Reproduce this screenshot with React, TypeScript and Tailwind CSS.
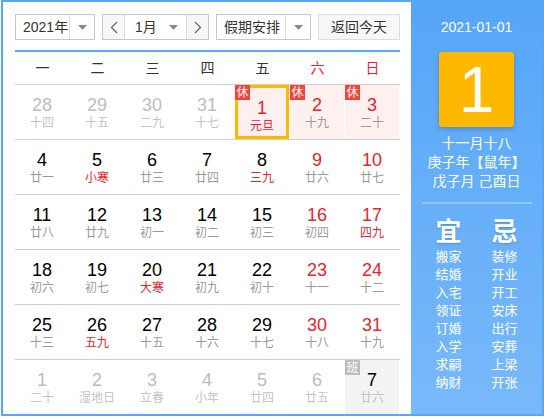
import React from "react";

type Day = {
  n: number;
  lunar: string;
  other?: boolean;
  red?: boolean;
  fest?: boolean;
  badge?: "休" | "班";
  selected?: boolean;
};

const weeks: Day[][] = [
  [
    { n: 28, lunar: "十四", other: true },
    { n: 29, lunar: "十五", other: true },
    { n: 30, lunar: "二九", other: true },
    { n: 31, lunar: "十七", other: true },
    { n: 1, lunar: "元旦", red: true, fest: true, badge: "休", selected: true },
    { n: 2, lunar: "十九", red: true, badge: "休" },
    { n: 3, lunar: "二十", red: true, badge: "休" },
  ],
  [
    { n: 4, lunar: "廿一" },
    { n: 5, lunar: "小寒", fest: true },
    { n: 6, lunar: "廿三" },
    { n: 7, lunar: "廿四" },
    { n: 8, lunar: "三九", fest: true },
    { n: 9, lunar: "廿六", red: true },
    { n: 10, lunar: "廿七", red: true },
  ],
  [
    { n: 11, lunar: "廿八" },
    { n: 12, lunar: "廿九" },
    { n: 13, lunar: "初一" },
    { n: 14, lunar: "初二" },
    { n: 15, lunar: "初三" },
    { n: 16, lunar: "初四", red: true },
    { n: 17, lunar: "四九", red: true, fest: true },
  ],
  [
    { n: 18, lunar: "初六" },
    { n: 19, lunar: "初七" },
    { n: 20, lunar: "大寒", fest: true },
    { n: 21, lunar: "初九" },
    { n: 22, lunar: "初十" },
    { n: 23, lunar: "十一", red: true },
    { n: 24, lunar: "十二", red: true },
  ],
  [
    { n: 25, lunar: "十三" },
    { n: 26, lunar: "五九", fest: true },
    { n: 27, lunar: "十五" },
    { n: 28, lunar: "十六" },
    { n: 29, lunar: "十七" },
    { n: 30, lunar: "十八", red: true },
    { n: 31, lunar: "十九", red: true },
  ],
  [
    { n: 1, lunar: "二十", other: true },
    { n: 2, lunar: "湿地日", other: true },
    { n: 3, lunar: "立春", other: true },
    { n: 4, lunar: "小年", other: true },
    { n: 5, lunar: "廿四", other: true },
    { n: 6, lunar: "廿五", other: true },
    { n: 7, lunar: "廿六", badge: "班" },
  ],
];

const weekNames = ["一", "二", "三", "四", "五", "六", "日"];
const yi = ["搬家", "结婚", "入宅", "领证", "订婚", "入学", "求嗣", "纳财"];
const ji = ["装修", "开业", "开工", "安床", "出行", "安葬", "上梁", "开张"];

const Caret = () => (
  <svg width="9" height="5" viewBox="0 0 9 5">
    <path d="M0 0 L9 0 L4.5 5 Z" fill="#8a8a8a" />
  </svg>
);

const Chevron = ({ dir }: { dir: "l" | "r" }) => (
  <svg width="8" height="13" viewBox="0 0 8 13">
    <polyline
      points={dir === "l" ? "7,1 1.5,6.5 7,12" : "1,1 6.5,6.5 1,12"}
      fill="none"
      stroke="#666"
      strokeWidth="1.2"
    />
  </svg>
);

function Cell({ d }: { d: Day }) {
  let bg = "";
  if (d.badge === "休") bg = "bg-[#fff0f0]";
  if (d.badge === "班") bg = "bg-[#f3f3f3]";
  const numColor = d.other
    ? "text-[#bdbdbd]"
    : d.red
    ? "text-[#e5252b]"
    : "text-black";
  const lunarColor = d.other
    ? "text-[#c4c4c4]"
    : d.fest
    ? "text-[#e5252b]"
    : d.badge === "班"
    ? "text-[#c4c4c4]"
    : "text-[#9a9a9a]";
  return (
    <div className="relative h-[54px] w-[55px] pr-px">
      <div
        className={`relative flex h-full flex-col items-center pt-[10px] ${bg} ${
          d.selected ? "border-[3px] border-[#ffb800] pt-[7px]" : ""
        }`}
      >
        <div className={`text-[18px] leading-[20px] ${numColor}`}>{d.n}</div>
        <div className={`whitespace-nowrap text-[12px] leading-[16px] ${lunarColor}`}>{d.lunar}</div>
      </div>
      {d.badge && (
        <div
          className={`absolute left-0 top-0 flex h-[15px] w-[15px] items-center justify-center text-[12px] leading-none text-white ${
            d.badge === "休" ? "bg-[#f2433a]" : "bg-[#bdbdbd]"
          }`}
        >
          {d.badge}
        </div>
      )}
    </div>
  );
}

export default function App() {
  return (
    <div
      className="ml-px flex h-[416px] w-[543px] border-2 border-[#56a6f8] bg-white"
      style={{ fontFamily: '"Liberation Sans", "Noto Sans CJK SC", sans-serif' }}
    >
      {/* Calendar */}
      <div className="flex w-[408px] flex-col pl-[12px] pt-[12px]">
        <div className="flex h-[26px] items-stretch gap-[7px] whitespace-nowrap text-[14px] text-[#333]">
          <div className="flex w-[80px] border border-[#c8c8c8]">
            <div className="flex min-w-0 flex-1 items-center pl-[7px]">2021年</div>
            <div className="flex w-[25px] shrink-0 items-center justify-center border-l border-[#dcdcdc]">
              <Caret />
            </div>
          </div>
          <div className="flex w-[107px] border border-[#c8c8c8]">
            <div className="flex w-[22px] items-center justify-center border-r border-[#dcdcdc] bg-[#f7f7f7]">
              <Chevron dir="l" />
            </div>
            <div className="flex flex-1 items-center justify-between pl-[10px] pr-[8px]">
              <span>1月</span>
              <Caret />
            </div>
            <div className="flex w-[22px] items-center justify-center border-l border-[#dcdcdc] bg-[#f7f7f7]">
              <Chevron dir="r" />
            </div>
          </div>
          <div className="flex w-[95px] border border-[#c8c8c8]">
            <div className="flex min-w-0 flex-1 items-center pl-[7px]">假期安排</div>
            <div className="flex w-[25px] shrink-0 items-center justify-center border-l border-[#dcdcdc]">
              <Caret />
            </div>
          </div>
          <div className="flex w-[82px] items-center justify-center border border-[#dcdcdc] bg-[#f7f7f7]">
            返回今天
          </div>
        </div>

        <div className="mt-[10px] h-[2px] w-[385px] bg-[#56a8f8]" />

        <div className="flex h-[33px] w-[385px] border-b border-[#cfcfcf]">
          {weekNames.map((w, i) => (
            <div
              key={w}
              className={`flex w-[55px] items-center justify-center text-[14px] ${
                i >= 5 ? "text-[#e5252b]" : "text-[#333]"
              }`}
            >
              {w}
            </div>
          ))}
        </div>

        {weeks.map((row, ri) => (
          <div
            key={ri}
            className={`flex w-[385px] ${ri < weeks.length - 1 ? "border-b border-[#cfcfcf]" : ""}`}
          >
            {row.map((d, ci) => (
              <Cell key={ci} d={d} />
            ))}
          </div>
        ))}
      </div>

      {/* Side panel */}
      <div className="flex flex-1 flex-col items-center bg-gradient-to-b from-[#55a5f8] to-[#78b9fa] pt-[15px] text-white">
        <div className="text-[14px] leading-[20px]">2021-01-01</div>
        <div className="mt-[15px] flex h-[75px] w-[75px] items-center justify-center rounded-[3px] bg-[#ffb800] text-[64px] leading-none shadow-[0_2px_4px_rgba(0,0,0,0.2)]">
          1
        </div>
        <div className="mt-[7px] flex flex-col items-center text-[14px] leading-[19px]">
          <div>十一月十八</div>
          <div>庚子年【鼠年】</div>
          <div>戊子月 己酉日</div>
        </div>
        <div className="mt-[11px] h-[2px] w-[110px] bg-white/30" />
        <div className="mt-[13px] grid grid-cols-[56px_56px] text-center">
          <div className="text-[26px] font-bold leading-[30px] [text-shadow:0_1px_2px_rgba(0,0,0,0.2)]">宜</div>
          <div className="text-[26px] font-bold leading-[30px] [text-shadow:0_1px_2px_rgba(0,0,0,0.2)]">忌</div>
          <div className="mt-px flex flex-col text-[13px] leading-[18px]">
            {yi.map((t) => (
              <div key={t}>{t}</div>
            ))}
          </div>
          <div className="mt-px flex flex-col text-[13px] leading-[18px]">
            {ji.map((t) => (
              <div key={t}>{t}</div>
            ))}
          </div>
        </div>
      </div>
    </div>
  );
}
